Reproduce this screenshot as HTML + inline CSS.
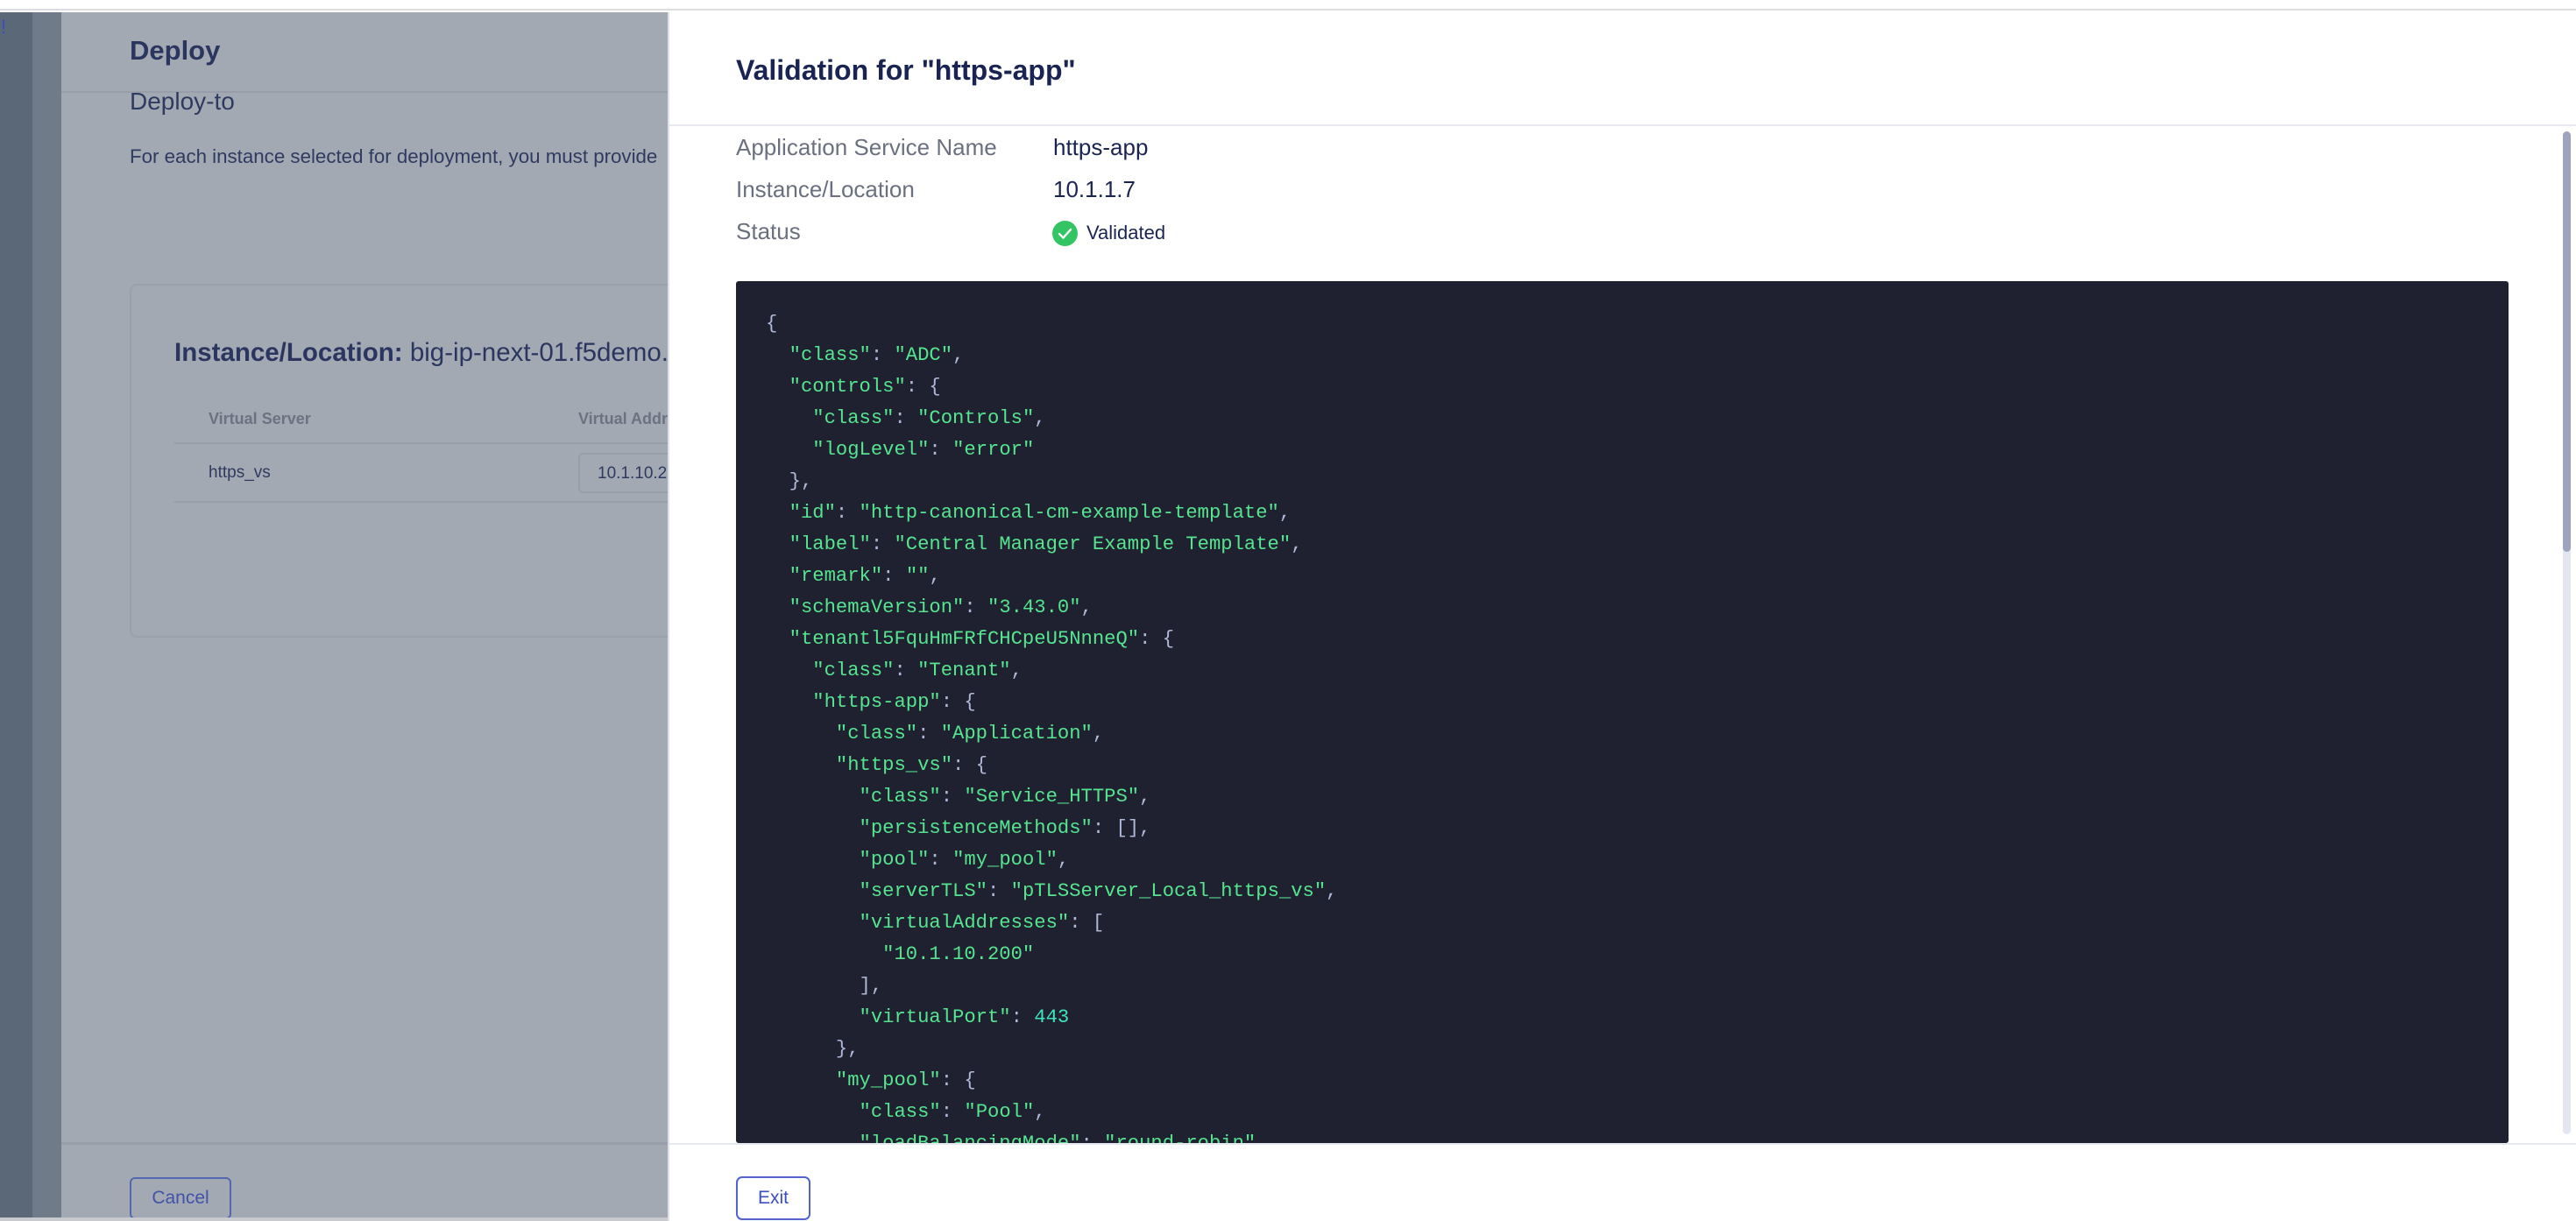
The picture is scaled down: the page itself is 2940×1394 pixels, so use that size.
<!DOCTYPE html>
<html><head><meta charset="utf-8"><style>
*{margin:0;padding:0;box-sizing:border-box}
body{width:2940px;height:1394px;overflow:hidden;background:#fff;font-family:"Liberation Sans",Arial,sans-serif;position:relative}
.abs{position:absolute}
.code{position:absolute;left:840px;top:321px;width:2023px;height:984px;background:#1f2130;border-radius:3px;overflow:hidden;padding:31px 0 0 34px;font-family:"Liberation Mono",monospace;font-size:22.2px;line-height:36px;color:#b0b8d8;white-space:pre}
.g{color:#55e58f}.n{color:#3fe6bc}
</style></head><body>
<div class="abs" style="left:0;top:0;width:2940px;height:12px;background:#fff;border-bottom:2px solid #dcdde0"></div>
<div class="abs" style="left:0;top:14px;width:37px;height:1380px;background:#5b6878"></div>
<div class="abs" style="left:1px;top:18px;color:#3b4fc0;font-size:22px">!</div>
<div class="abs" style="left:37px;top:14px;width:33px;height:1380px;background:#6f7b89"></div>
<div class="abs" style="left:70px;top:14px;width:693px;height:1380px;background:#a3a9b3"></div>
<div class="abs" style="left:70px;top:104px;width:693px;height:2px;background:#979eaa"></div>
<div class="abs" style="left:148px;top:40px;font-size:31px;font-weight:bold;color:#2b3660">Deploy</div>
<div class="abs" style="left:148px;top:100px;font-size:28px;color:#2f3a60">Deploy-to</div>
<div class="abs" style="left:148px;top:166px;font-size:22.3px;color:#2f3a60;white-space:nowrap">For each instance selected for deployment, you must provide</div>
<div class="abs" style="left:148px;top:324px;width:640px;height:404px;border:2px solid #9aa1ac;border-radius:8px"></div>
<div class="abs" style="left:199px;top:386px;font-size:29.5px;color:#2b3660;white-space:nowrap"><b>Instance/Location:</b> big-ip-next-01.f5demo.</div>
<div class="abs" style="left:238px;top:468px;font-size:18px;font-weight:bold;color:#6b7282">Virtual Server</div>
<div class="abs" style="left:660px;top:468px;font-size:18px;font-weight:bold;color:#6b7282;white-space:nowrap">Virtual Addr</div>
<div class="abs" style="left:199px;top:505px;width:564px;height:2px;background:#979eaa"></div>
<div class="abs" style="left:238px;top:529px;font-size:19px;color:#2f3a60">https_vs</div>
<div class="abs" style="left:660px;top:517px;width:110px;height:46px;border:2px solid #979eaa;border-radius:5px;padding:11px 0 0 20px;font-size:19px;color:#2f3a60">10.1.10.2</div>
<div class="abs" style="left:199px;top:572px;width:564px;height:2px;background:#979eaa"></div>
<div class="abs" style="left:70px;top:1304px;width:693px;height:3px;background:#979eaa"></div>
<div class="abs" style="left:148px;top:1344px;width:116px;height:48px;border:2px solid #5566b0;border-radius:6px;font-size:21px;color:#4252a8;text-align:center;line-height:44px">Cancel</div>
<div class="abs" style="left:0;top:1390px;width:875px;height:4px;background:#c9cacd"></div>
<div class="abs" style="left:762px;top:14px;width:2178px;height:1380px;background:#fff;border-left:2px solid #e0e1e6"></div>
<div class="abs" style="left:840px;top:62px;font-size:32px;font-weight:bold;color:#1a2452;white-space:nowrap">Validation for "https-app"</div>
<div class="abs" style="left:764px;top:142px;width:2176px;height:2px;background:#e8e9ef"></div>
<div class="abs" style="left:840px;top:153px;font-size:26px;color:#6b7080">Application Service Name</div>
<div class="abs" style="left:840px;top:201px;font-size:26px;color:#6b7080">Instance/Location</div>
<div class="abs" style="left:840px;top:249px;font-size:26px;color:#6b7080">Status</div>
<div class="abs" style="left:1202px;top:153px;font-size:26px;color:#1a2452">https-app</div>
<div class="abs" style="left:1202px;top:201px;font-size:26px;color:#1a2452">10.1.1.7</div>
<svg class="abs" style="left:1201px;top:252px" width="29" height="29" viewBox="0 0 29 29"><circle cx="14.5" cy="14.5" r="14.5" fill="#33c463"/><path d="M8 15 l4.5 4.5 L21 10" stroke="#fff" stroke-width="2.4" fill="none" stroke-linecap="round" stroke-linejoin="round"/></svg>
<div class="abs" style="left:1240px;top:253px;font-size:22px;color:#1a2452">Validated</div>
<div class="code">{
  <span class="g">"class"</span>: <span class="g">"ADC"</span>,
  <span class="g">"controls"</span>: {
    <span class="g">"class"</span>: <span class="g">"Controls"</span>,
    <span class="g">"logLevel"</span>: <span class="g">"error"</span>
  },
  <span class="g">"id"</span>: <span class="g">"http-canonical-cm-example-template"</span>,
  <span class="g">"label"</span>: <span class="g">"Central Manager Example Template"</span>,
  <span class="g">"remark"</span>: <span class="g">""</span>,
  <span class="g">"schemaVersion"</span>: <span class="g">"3.43.0"</span>,
  <span class="g">"tenantl5FquHmFRfCHCpeU5NnneQ"</span>: {
    <span class="g">"class"</span>: <span class="g">"Tenant"</span>,
    <span class="g">"https-app"</span>: {
      <span class="g">"class"</span>: <span class="g">"Application"</span>,
      <span class="g">"https_vs"</span>: {
        <span class="g">"class"</span>: <span class="g">"Service_HTTPS"</span>,
        <span class="g">"persistenceMethods"</span>: [],
        <span class="g">"pool"</span>: <span class="g">"my_pool"</span>,
        <span class="g">"serverTLS"</span>: <span class="g">"pTLSServer_Local_https_vs"</span>,
        <span class="g">"virtualAddresses"</span>: [
          <span class="g">"10.1.10.200"</span>
        ],
        <span class="g">"virtualPort"</span>: <span class="n">443</span>
      },
      <span class="g">"my_pool"</span>: {
        <span class="g">"class"</span>: <span class="g">"Pool"</span>,
        <span class="g">"loadBalancingMode"</span>: <span class="g">"round-robin"</span>,
</div>
<div class="abs" style="left:764px;top:1305px;width:2176px;height:2px;background:#e6e8f0"></div>
<div class="abs" style="left:2925px;top:150px;width:9px;height:1145px;background:#e4e6ef;border-radius:5px"></div>
<div class="abs" style="left:2925px;top:150px;width:9px;height:480px;background:#9ea4be;border-radius:5px"></div>
<div class="abs" style="left:840px;top:1343px;width:85px;height:50px;border:2px solid #4f63d2;border-radius:7px;font-size:21px;color:#3a4fc0;text-align:center;line-height:46px;background:#fff">Exit</div>
</body></html>
